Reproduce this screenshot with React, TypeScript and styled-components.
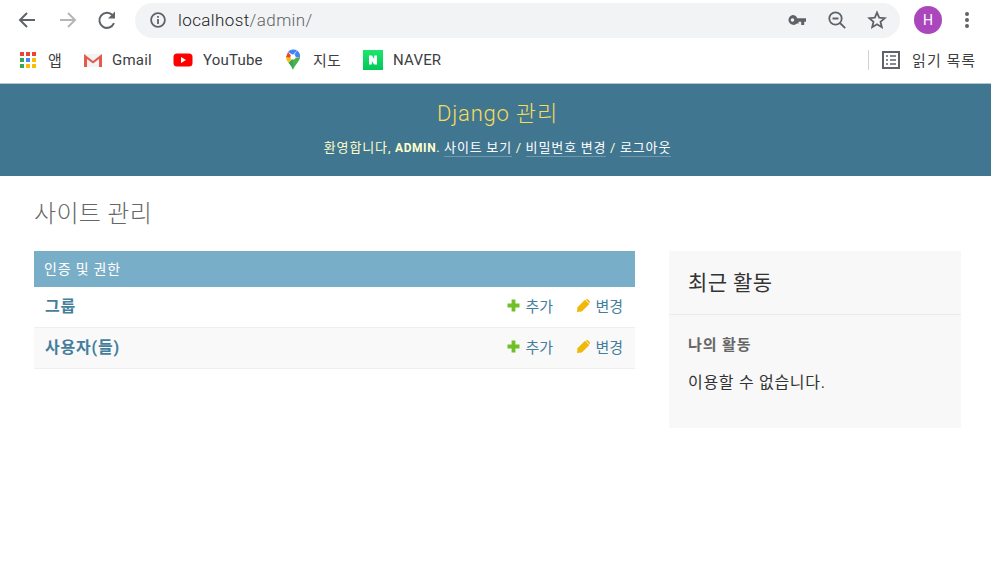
import styled, { createGlobalStyle } from "styled-components";

const GlobalStyle = createGlobalStyle`
  html, body {
    margin: 0;
    padding: 0;
    background: #fff;
    font-family: Roboto, "Noto Sans CJK KR", sans-serif;
  }
  * { box-sizing: border-box; }
`;

const Page = styled.div`
  width: 991px;
  height: 573px;
  overflow: hidden;
  background: #fff;
`;

/* browser chrome */
const Toolbar = styled.div`
  height: 41px;
  display: flex;
  align-items: center;
  padding: 0 0 1px 0;
`;

const NavButton = styled.div`
  width: 40px;
  height: 38px;
  display: flex;
  align-items: center;
  justify-content: center;
  flex: none;
`;

const NavGroup = styled.div`
  display: flex;
  margin-left: 7px;
  gap: 0;
`;

const Omnibox = styled.div`
  width: 765px;
  height: 35px;
  margin-left: 8px;
  border-radius: 18px;
  background: #f1f3f4;
  display: flex;
  align-items: center;
  padding: 0 3px 0 14px;
`;

const Url = styled.div`
  margin-left: 11px;
  flex: 1;
  font-size: 17px;
  font-weight: 300;
  letter-spacing: 0.4px;
  color: #5f6368;
  line-height: 20px;
  span { color: #202124; }
`;

const OmniIcon = styled.div`
  width: 40px;
  height: 30px;
  display: flex;
  align-items: center;
  justify-content: center;
`;

const Avatar = styled.div`
  width: 28px;
  height: 28px;
  margin-left: 14px;
  border-radius: 50%;
  background: #ab47bc;
  color: #fff;
  font-size: 14px;
  display: flex;
  align-items: center;
  justify-content: center;
`;

const Kebab = styled.div`
  margin-left: 11px;
  width: 28px;
  display: flex;
  justify-content: center;
`;

const Bookmarks = styled.div`
  height: 43px;
  display: flex;
  align-items: center;
  padding: 0 15px 5px 20px;
  border-bottom: 1px solid #b7c4cc;
`;

const Bookmark = styled.div<{ $gap: number; $width: number }>`
  display: flex;
  align-items: center;
  gap: ${(p) => p.$gap}px;
  width: ${(p) => p.$width}px;
  font-size: 15px;
  letter-spacing: 0.2px;
  color: #3c4043;
  white-space: nowrap;
`;

const ReadingList = styled.div`
  margin-left: auto;
  display: flex;
  align-items: center;
  font-size: 15px;
  color: #3c4043;
  gap: 12px;
  border-left: 1px solid #d0d2d4;
  height: 20px;
  padding-left: 13px;
  letter-spacing: 1px;
`;

/* django admin */
const Header = styled.header`
  height: 92px;
  background: #417690;
  text-align: center;
  padding: 14px 0 0 4px;
`;

const Branding = styled.h1`
  margin: 0;
  font-size: 22px;
  line-height: 32px;
  font-weight: 300;
  letter-spacing: 0.8px;
  color: #f5dd5d;
`;

const UserTools = styled.div`
  margin-top: 10px;
  font-size: 13px;
  line-height: 16px;
  color: #ffc;
  letter-spacing: 0.9px;
  word-spacing: -0.5px;
  strong { font-size: 12px; letter-spacing: 0.55px; font-weight: 700; text-transform: uppercase; }
`;

const ToolLink = styled.a`
  color: #fff;
  border-bottom: 1px solid rgba(255, 255, 255, 0.25);
  padding-bottom: 1px;
`;

const Content = styled.main`
  padding: 22px 30px 0 34px;
`;

const PageTitle = styled.h2`
  margin: 0 0 21px;
  font-size: 24px;
  line-height: 32px;
  font-weight: 300;
  letter-spacing: 0.3px;
  color: #666;
`;

const Columns = styled.div`
  display: flex;
  align-items: flex-start;
  gap: 34px;
`;

const Module = styled.section`
  width: 601px;
`;

const Caption = styled.div`
  height: 36px;
  background: #79aec8;
  color: #fff;
  font-size: 14px;
  letter-spacing: 0.8px;
  display: flex;
  align-items: center;
  padding-left: 10px;
  padding-bottom: 3px;
`;

const Row = styled.div<{ $alt?: boolean }>`
  height: 41px;
  display: flex;
  align-items: center;
  padding: 0 12px 4px 11px;
  background: ${(p) => (p.$alt ? "#f9f9f9" : "#fff")};
  border-bottom: 1px solid #eee;
`;

const ModelName = styled.a`
  flex: 1;
  font-size: 16px;
  letter-spacing: 0.8px;
  font-weight: 700;
  color: #447e9b;
`;

const Action = styled.a<{ $width: number }>`
  width: ${(p) => p.$width}px;
  display: flex;
  align-items: center;
  justify-content: flex-end;
  gap: 6px;
  font-size: 15px;
  letter-spacing: -0.1px;
  white-space: nowrap;
  color: #447e9b;
`;

const Sidebar = styled.aside`
  width: 292px;
  height: 177px;
  background: #f8f8f8;
`;

const SideTitle = styled.h2`
  margin: 0;
  height: 64px;
  padding: 18px 18px 0 19px;
  font-size: 21px;
  line-height: 28px;
  font-weight: 400;
  letter-spacing: 0.4px;
  color: #333;
  border-bottom: 1px solid #eaeaea;
`;

const SideSub = styled.h3`
  margin: 0;
  padding: 20px 19px 0;
  font-size: 15px;
  line-height: 20px;
  font-weight: 700;
  letter-spacing: 0.9px;
  color: #666;
`;

const SideText = styled.p`
  margin: 0;
  padding: 18px 19px 0;
  font-size: 16px;
  line-height: 20px;
  letter-spacing: 0.7px;
  color: #333;
`;

const BackIcon = ({ color }: { color: string }) => (
  <svg width="20" height="20" viewBox="0 0 20 20" fill="none" stroke={color} strokeWidth="2">
    <path d="M18 10H3M10 3l-7 7 7 7" />
  </svg>
);

const ForwardIcon = ({ color }: { color: string }) => (
  <svg width="20" height="20" viewBox="0 0 20 20" fill="none" stroke={color} strokeWidth="2">
    <path d="M3 10h15M11 3l7 7-7 7" />
  </svg>
);

const ReloadIcon = () => (
  <svg width="20" height="20" viewBox="0 0 20 20" fill="none">
    <path d="M17 13.200A7.600 7.600 0 1 1 15.500 5" stroke="#5f6368" strokeWidth="2" />
    <path d="M18 1.500v7h-7z" fill="#5f6368" />
  </svg>
);

const InfoIcon = () => (
  <svg width="18" height="18" viewBox="0 0 18 18" fill="none">
    <circle cx="9" cy="9" r="6.900" stroke="#5f6368" strokeWidth="1.800" />
    <path d="M8.100 8h1.800v5H8.100zM8.100 5h1.800v1.800H8.100z" fill="#5f6368" />
  </svg>
);

const KeyIcon = () => (
  <svg width="20" height="12" viewBox="0 0 20 12">
    <path
      fillRule="evenodd"
      d="M5.500 1a5 5 0 0 1 4.700 3.300H19v3.400h-1.800V11h-3V7.700h-2.600V9.500H10A5 5 0 1 1 5.500 1zm0 3.200a1.800 1.800 0 1 0 0 3.600 1.800 1.800 0 0 0 0-3.600z"
      fill="#5f6368"
    />
  </svg>
);

const ZoomOutIcon = () => (
  <svg width="20" height="20" viewBox="0 0 20 20" fill="none" stroke="#5f6368" strokeWidth="1.800">
    <circle cx="8.500" cy="8.500" r="6.200" />
    <path d="M5.500 8.500h6M13 13l5.200 5.200" />
  </svg>
);

const StarIcon = () => (
  <svg width="20" height="20" viewBox="0 0 20 20" fill="none" stroke="#5f6368" strokeWidth="1.800">
    <path d="M10 2.600l2.200 5.100 5.500.5-4.200 3.600 1.300 5.400L10 14.300l-4.800 2.900 1.300-5.400-4.200-3.600 5.500-.5z" />
  </svg>
);

const KebabIcon = () => (
  <svg width="6" height="18" viewBox="0 0 6 18" fill="#5f6368">
    <circle cx="3" cy="3" r="2" />
    <circle cx="3" cy="9" r="2" />
    <circle cx="3" cy="15" r="2" />
  </svg>
);

const appsColors = ["#ea4335", "#ea4335", "#ea4335", "#34a853", "#4285f4", "#fbbc04", "#34a853", "#fbbc04", "#fbbc04"];

const AppsIcon = () => (
  <svg width="16" height="16" viewBox="0 0 16 16">
    {appsColors.map((c, i) => (
      <rect key={i} x={(i % 3) * 6} y={Math.floor(i / 3) * 6} width="4" height="4" fill={c} />
    ))}
  </svg>
);

const GmailIcon = () => (
  <svg width="20" height="16" viewBox="0 0 20 16">
    <path d="M1 2h18v13H1z" fill="#f3f3f3" />
    <path d="M1 15V2l9 7 9-7v13h-3V7l-6 4.600L4 7v8z" fill="#e35b4f" />
  </svg>
);

const YouTubeIcon = () => (
  <svg width="20" height="14" viewBox="0 0 20 14">
    <rect width="19" height="13" x="0.500" y="0.500" rx="3.500" fill="#f00" />
    <path d="M8 4l5 3-5 3z" fill="#fff" />
  </svg>
);

const MapsIcon = () => (
  <svg width="16" height="22" viewBox="0 0 16 22">
    <path d="M8 21c-1-3-2.500-4.600-4.600-7.300L8 9z" fill="#34a853" />
    <path d="M8 21c1-3 2.500-4.600 4.600-7.600C14 11.500 15 10 15 8L8 9z" fill="#4caf50" />
    <path d="M1 8c0 2.200 1 3.700 2.400 5.700L8 8z" fill="#fbbc04" />
    <path d="M3 3L1 8l7 1z" fill="#ea4335" />
    <path d="M3 3a7 7 0 0 1 9-1.600L8 6z" fill="#4285f4" />
    <path d="M12 1.400A7 7 0 0 1 15 8L8 8z" fill="#4285f4" />
    <circle cx="8" cy="8" r="2.600" fill="#fff" />
  </svg>
);

const NaverIcon = () => (
  <svg width="20" height="20" viewBox="0 0 20 20">
    <defs>
      <linearGradient id="naverFill" x1="0" y1="0" x2="0" y2="1">
        <stop offset="0" stopColor="#1ee66a" />
        <stop offset="1" stopColor="#03c75a" />
      </linearGradient>
    </defs>
    <rect width="20" height="20" fill="url(#naverFill)" />
    <path d="M6 5.500h3l2.200 3.500V5.500H14v9h-3L8.800 11v3.500H6z" fill="#fff" />
  </svg>
);

const ReadingIcon = () => (
  <svg width="18" height="18" viewBox="0 0 18 18" fill="none" stroke="#5f6368">
    <rect x="1" y="1" width="16" height="16" strokeWidth="2" />
    <path d="M4 5h2M8 5h6M4 9h2M8 9h6M4 13h2M8 13h6" strokeWidth="1.500" />
  </svg>
);

const PlusIcon = () => (
  <svg width="13" height="13" viewBox="0 0 13 13">
    <path d="M4.600 0.500h3.800v4.100h4.100v3.800H8.400v4.100H4.600V8.400H0.500V4.600h4.100z" fill="#70bf2b" />
  </svg>
);

const PencilIcon = () => (
  <svg width="13" height="13" viewBox="0 0 13 13">
    <path d="M0 13l0.500-4.800 7.500-7.500 4.300 4.300-7.500 7.500z" fill="#efb80b" />
    <path d="M8.800 0.600l0.700-0.400a1 1 0 0 1 1.300 0l2 2a1 1 0 0 1 0 1.300l-0.400 0.700z" fill="#efb80b" />
  </svg>
);

export default function App() {
  return (
    <Page>
      <GlobalStyle />
      <Toolbar>
        <NavGroup>
          <NavButton><BackIcon color="#5f6368" /></NavButton>
          <NavButton><ForwardIcon color="#b4b6b8" /></NavButton>
          <NavButton><ReloadIcon /></NavButton>
        </NavGroup>
        <Omnibox>
          <InfoIcon />
          <Url><span>localhost</span>/admin/</Url>
          <OmniIcon><KeyIcon /></OmniIcon>
          <OmniIcon><ZoomOutIcon /></OmniIcon>
          <OmniIcon><StarIcon /></OmniIcon>
        </Omnibox>
        <Avatar>H</Avatar>
        <Kebab><KebabIcon /></Kebab>
      </Toolbar>
      <Bookmarks>
        <Bookmark $gap={12} $width={63}><AppsIcon />앱</Bookmark>
        <Bookmark $gap={9} $width={90}><GmailIcon />Gmail</Bookmark>
        <Bookmark $gap={10} $width={112}><YouTubeIcon />YouTube</Bookmark>
        <Bookmark $gap={12} $width={78}><MapsIcon />지도</Bookmark>
        <Bookmark $gap={10} $width={90}><NaverIcon />NAVER</Bookmark>
        <ReadingList><ReadingIcon />읽기 목록</ReadingList>
      </Bookmarks>
      <Header>
        <Branding>Django 관리</Branding>
        <UserTools>
          환영합니다, <strong>admin</strong>. <ToolLink>사이트 보기</ToolLink> / <ToolLink>비밀번호 변경</ToolLink> / <ToolLink>로그아웃</ToolLink>
        </UserTools>
      </Header>
      <Content>
        <PageTitle>사이트 관리</PageTitle>
        <Columns>
          <Module>
            <Caption>인증 및 권한</Caption>
            <Row>
              <ModelName>그룹</ModelName>
              <Action $width={47}><PlusIcon />추가</Action>
              <Action $width={70}><PencilIcon />변경</Action>
            </Row>
            <Row $alt>
              <ModelName>사용자(들)</ModelName>
              <Action $width={47}><PlusIcon />추가</Action>
              <Action $width={70}><PencilIcon />변경</Action>
            </Row>
          </Module>
          <Sidebar>
            <SideTitle>최근 활동</SideTitle>
            <SideSub>나의 활동</SideSub>
            <SideText>이용할 수 없습니다.</SideText>
          </Sidebar>
        </Columns>
      </Content>
    </Page>
  );
}
